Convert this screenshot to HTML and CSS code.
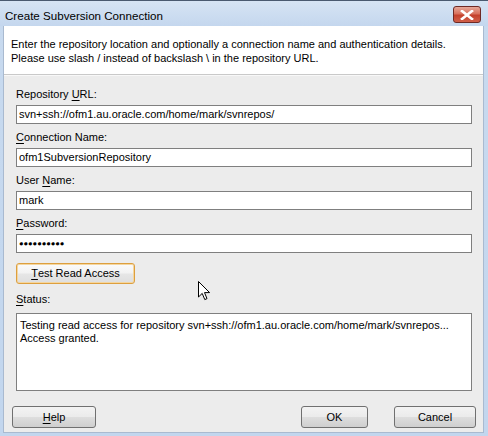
FILE: index.html
```html
<!DOCTYPE html>
<html>
<head>
<meta charset="utf-8">
<link rel="stylesheet" href="styles.css">
</head>
<body>
<div class="window">
  <div class="titlebar">
    <span class="title">Create Subversion Connection</span>
    <div class="close">
      <svg width="14" height="10" viewBox="0 0 14 10"><path d="M2 1 L12 9 M12 1 L2 9" stroke="#fff" stroke-width="2.6" stroke-linecap="square"/></svg>
    </div>
  </div>
  <div class="client">
    <div class="header">
      <div>Enter the repository location and optionally a connection name and authentication details.</div>
      <div>Please use slash / instead of backslash \ in the repository URL.</div>
    </div>
    <div class="form">
      <div class="label">Repository <u>U</u>RL:</div>
      <div class="input">svn+ssh://ofm1.au.oracle.com/home/mark/svnrepos/</div>
      <div class="label"><u>C</u>onnection Name:</div>
      <div class="input">ofm1SubversionRepository</div>
      <div class="label">User <u>N</u>ame:</div>
      <div class="input">mark</div>
      <div class="label"><u>P</u>assword:</div>
      <div class="input pwd">●●●●●●●●●●</div>
      <div class="btn test"><u>T</u>est Read Access</div>
      <div class="label status-label"><u>S</u>tatus:</div>
      <div class="status">
        <div>Testing read access for repository svn+ssh://ofm1.au.oracle.com/home/mark/svnrepos...</div>
        <div>Access granted.</div>
      </div>
    </div>
    <div class="footer">
      <div class="btn help"><u>H</u>elp</div>
      <div class="spacer"></div>
      <div class="btn ok">OK</div>
      <div class="btn cancel">Cancel</div>
    </div>
  </div>
  <svg class="cursor" width="13" height="20" viewBox="0 0 13 20"><path d="M0.5 0.5 L0.5 16 L4.2 12.4 L6.8 18.6 L9 17.6 L6.5 11.6 L11.6 11.6 Z" fill="#fff" stroke="#000" stroke-width="1"/></svg>
</div>
</body>
</html>
```
FILE: styles.css
```css
html, body {
  margin: 0;
  padding: 0;
}
body {
  width: 488px;
  height: 436px;
  overflow: hidden;
  font-family: "Liberation Sans", Arial, sans-serif;
  font-size: 11px;
  color: #000;
}
.window {
  position: relative;
  width: 488px;
  height: 436px;
  box-sizing: border-box;
  background: linear-gradient(#c8daef, #c2d6ee);
  border-top: 1px solid #4a5a70;
  display: flex;
  flex-direction: column;
}
.titlebar {
  height: 25px;
  display: flex;
  align-items: center;
  padding: 0 7px 0 5px;
  background: linear-gradient(#d6e4f4, #c4d7ee);
}
.title {
  flex: 1;
  font-size: 11.6px;
  color: #000;
  padding-top: 3px;
}
.close {
  width: 28px;
  height: 17px;
  margin-top: 2px;
  box-sizing: border-box;
  border: 1px solid #6e2a25;
  border-radius: 3px;
  background: linear-gradient(#e6a899 0%, #d8705c 45%, #c4412c 55%, #d0604a 100%);
  display: flex;
  align-items: center;
  justify-content: center;
}
.client {
  flex: 1;
  margin: 0 4px 3px 3px;
  background: #ececec;
  display: flex;
  flex-direction: column;
  border: 1px solid #a9bad0;
  border-top: none;
}
.header {
  background: #fff;
  height: 49px;
  box-sizing: border-box;
  padding: 11px 0 0 7px;
  line-height: 14px;
  border-bottom: 1px solid #c9c9c9;
  box-shadow: 0 1px 0 #f8f8f8;
  white-space: nowrap;
}
.form {
  padding: 12px 11px 0 12px;
  display: flex;
  flex-direction: column;
}
.label {
  line-height: 15px;
  height: 15px;
  margin-bottom: 3px;
}
.label u, .btn u {
  text-decoration: underline;
  text-underline-offset: 2px;
}
.input {
  height: 19px;
  box-sizing: border-box;
  border: 1px solid #7f7f7f;
  background: #fff;
  line-height: 17px;
  padding-left: 2px;
  margin-bottom: 6px;
  white-space: nowrap;
  overflow: hidden;
}
.pwd {
  font-size: 7.6px;
  letter-spacing: -0.05px;
  line-height: 17px;
}
.btn {
  height: 22px;
  box-sizing: border-box;
  border: 1px solid #707070;
  border-radius: 3px;
  background: linear-gradient(#f3f3f3 0%, #ebebeb 48%, #dddddd 52%, #cfcfcf 100%);
  display: flex;
  align-items: center;
  justify-content: center;
  line-height: 15px;
}
.test {
  width: 119px;
  height: 21px;
  margin-top: 4px;
  border-color: #dd9f3e;
  box-shadow: inset 0 0 0 1px #f4d6a0;
  background: linear-gradient(#fbfbfb 0%, #f2f2f2 48%, #e6e6e6 52%, #dedede 100%);
}
.status-label {
  margin-top: 8px;
  margin-bottom: 6px;
}
.status {
  height: 78px;
  box-sizing: border-box;
  border: 1px solid #7f7f7f;
  background: #fff;
  padding: 5px 3px;
  line-height: 13px;
  white-space: nowrap;
  overflow: hidden;
}
.footer {
  display: flex;
  padding: 15px 7px 0 8px;
  gap: 26px;
}
.spacer {
  flex: 1;
}
.help { width: 84px; }
.ok { width: 67px; }
.cancel { width: 82px; }
.cursor {
  position: absolute;
  left: 198px;
  top: 280px;
}
```
